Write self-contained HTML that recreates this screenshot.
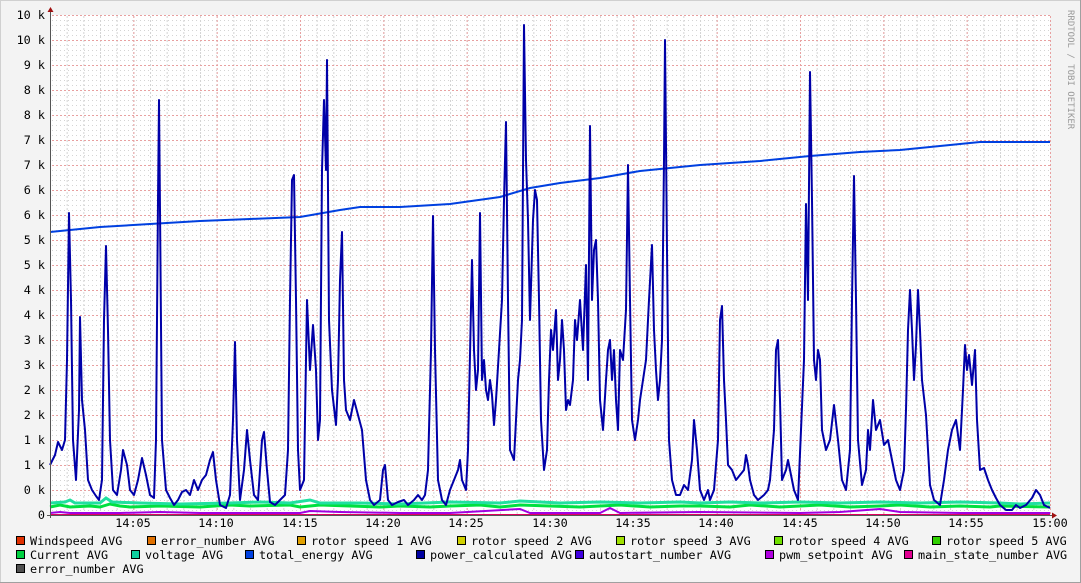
<!DOCTYPE html>
<html><head><meta charset="utf-8"><style>
html,body{margin:0;padding:0;background:#f3f3f3}
svg{display:block}
text{font-family:"DejaVu Sans Mono","Liberation Mono",monospace;font-size:11.8px;fill:#000}
</style></head><body>
<svg width="1081" height="583" viewBox="0 0 1081 583" xmlns="http://www.w3.org/2000/svg">
<defs>
<pattern id="mh" x="0" y="15" width="4" height="5" patternUnits="userSpaceOnUse"><rect x="0" y="0" width="1" height="1" fill="#d4d4d4"/></pattern>
<pattern id="mv" x="50" y="0" width="16.667" height="4" patternUnits="userSpaceOnUse"><rect x="0" y="0" width="1" height="2" fill="#d4d4d4"/></pattern>
<pattern id="Mh" x="0" y="15" width="4" height="25" patternUnits="userSpaceOnUse"><rect x="0" y="0" width="2" height="1" fill="#e8a0a0"/></pattern>
<pattern id="Mv" x="50" y="0" width="83.333" height="4" patternUnits="userSpaceOnUse"><rect x="0" y="0" width="1" height="2" fill="#e8a0a0"/></pattern>
</defs>
<rect x="0" y="0" width="1081" height="583" fill="#f3f3f3"/>
<rect x="0.5" y="0.5" width="1080" height="582" fill="none" stroke="#d0d0d0"/>
<line x1="1080.5" y1="0" x2="1080.5" y2="583" stroke="#a0a0a0"/>
<line x1="0" y1="582.5" x2="1081" y2="582.5" stroke="#a0a0a0"/>
<rect x="50" y="15" width="1000" height="500" fill="#fff"/>
<rect x="50" y="15" width="1000" height="500" fill="url(#mh)"/>
<rect x="50" y="15" width="1000" height="500" fill="url(#mv)"/>
<rect x="50" y="15" width="1001" height="500" fill="url(#Mh)"/>
<rect x="50" y="15" width="1001" height="500" fill="url(#Mv)"/>
<g text-anchor="end">
<text x="45" y="19">10 k</text><text x="45" y="44">10 k</text><text x="45" y="69">9 k</text><text x="45" y="94">8 k</text><text x="45" y="119">8 k</text><text x="45" y="144">7 k</text><text x="45" y="169">7 k</text><text x="45" y="194">6 k</text><text x="45" y="219">6 k</text><text x="45" y="244">5 k</text><text x="45" y="269">5 k</text><text x="45" y="294">4 k</text><text x="45" y="319">4 k</text><text x="45" y="344">3 k</text><text x="45" y="369">3 k</text><text x="45" y="394">2 k</text><text x="45" y="419">2 k</text><text x="45" y="444">1 k</text><text x="45" y="469">1 k</text><text x="45" y="494">0 k</text><text x="45" y="519">0</text>
</g>
<g text-anchor="middle">
<text x="133" y="527">14:05</text><text x="216" y="527">14:10</text><text x="300" y="527">14:15</text><text x="383" y="527">14:20</text><text x="466" y="527">14:25</text><text x="550" y="527">14:30</text><text x="633" y="527">14:35</text><text x="716" y="527">14:40</text><text x="800" y="527">14:45</text><text x="883" y="527">14:50</text><text x="966" y="527">14:55</text><text x="1050" y="527">15:00</text>
</g>
<text transform="translate(1068,10) rotate(90)" style="font-size:9px;fill:#999">RRDTOOL / TOBI OETIKER</text>
<polyline fill="none" stroke="#00e040" stroke-width="3" points="50,507 60,505 70,507 90,506 100,507 110,504 120,506 130,507 160,506 200,507 230,505 250,506 290,505 300,507 320,505 350,506 380,507 400,506 430,507 450,506 480,505 500,507 520,505 550,506 580,507 600,506 620,505 650,507 680,506 700,506 730,507 750,505 780,507 800,506 820,505 850,507 880,506 900,505 930,507 960,506 990,507 1000,506 1050,507"/>
<polyline fill="none" stroke="#20e0a0" stroke-width="3" points="50,503 65,502 70,500 75,503 100,503 106,498 112,502 140,503 180,504 230,503 260,502 290,503 310,500 320,503 360,503 400,504 450,502 500,503 520,501 560,503 600,502 640,503 680,502 700,503 730,502 760,503 800,502 840,503 880,502 920,503 960,502 1000,503 1020,504 1050,503"/>
<polyline fill="none" stroke="#a000e0" stroke-width="2" points="50,513 60,512 70,513 120,513 160,512 200,513 300,513 310,511 340,512 400,513 450,513 520,509 530,513 600,513 610,508 620,513 700,512 800,513 840,512 880,509 900,512 960,513 1050,513"/>
<line x1="50" y1="514.5" x2="1050" y2="514.5" stroke="#e00060" stroke-width="1"/>
<polyline fill="none" stroke="#0040e0" stroke-width="2" points="50,232 100,227 150,224 200,221 250,219 300,217 340,210 360,207 400,207 450,204 500,197 530,188 560,183 600,178 640,171 700,165 760,161 810,156 860,152 900,150 940,146 980,142 1050,142"/>
<polyline fill="none" stroke="#0000a8" stroke-width="2" stroke-linejoin="round" points="50,465 55,455 58,442 62,450 65,440 67,360 69,213 71,300 73,440 76,480 79,410 80,317 82,400 85,430 88,480 92,490 96,496 99,500 102,480 104,320 106,246 108,330 110,440 113,490 117,495 121,470 123,450 127,465 130,490 134,495 138,480 142,458 146,475 150,495 154,498 156,440 158,200 159,100 160,210 162,440 166,490 170,498 174,505 178,500 182,492 186,490 190,495 194,480 198,490 202,480 206,475 210,460 213,452 216,480 220,505 226,508 230,495 233,420 235,342 237,440 240,500 244,470 247,430 250,460 254,495 258,500 262,440 264,432 267,470 270,502 275,505 280,500 285,495 288,450 290,300 292,180 294,175 296,300 298,450 300,490 304,480 307,300 310,370 313,325 316,370 318,440 320,420 322,170 324,100 326,170 327,60 329,320 332,390 336,425 338,380 340,280 342,232 344,380 346,410 350,420 354,400 358,415 362,430 366,480 370,500 374,505 380,500 383,470 385,465 388,500 392,505 398,502 404,500 408,505 414,500 418,495 422,500 425,495 428,470 431,350 433,216 435,350 438,480 442,500 446,505 450,490 454,480 458,470 460,460 462,480 466,490 468,450 472,260 474,350 476,390 478,370 480,213 482,380 484,360 486,390 488,400 490,380 492,395 494,425 496,400 499,350 502,300 504,200 506,122 508,300 510,450 514,460 518,380 520,360 522,320 524,25 526,160 528,220 530,320 533,220 535,190 537,200 539,300 541,420 544,470 547,450 549,380 551,330 553,350 556,310 558,380 560,360 562,320 564,350 566,410 568,400 570,405 573,380 575,320 577,340 580,300 583,350 586,265 588,380 590,126 592,300 594,250 596,240 598,300 600,400 603,430 606,380 608,350 610,340 612,380 614,350 616,400 618,430 620,350 623,360 626,310 628,165 630,300 632,420 635,440 638,420 640,400 643,380 646,360 649,300 652,245 654,330 656,370 658,400 660,380 662,340 664,160 665,40 667,250 669,440 672,480 676,495 680,495 684,485 688,490 692,460 694,420 697,450 700,490 704,500 708,490 710,500 714,490 718,440 720,320 722,306 724,380 726,420 728,465 732,470 736,480 740,475 744,470 746,455 748,465 750,480 754,495 758,500 764,495 768,490 770,480 774,430 776,350 778,340 780,400 782,480 786,470 788,460 790,470 794,490 798,500 804,360 806,204 808,300 810,72 812,200 814,360 816,380 818,350 820,360 822,430 826,450 830,440 834,405 838,440 842,480 846,490 850,450 852,300 854,176 856,300 858,440 862,485 866,470 868,430 870,450 873,400 876,430 880,420 884,445 888,440 892,460 896,480 900,490 904,470 906,410 908,330 910,290 912,330 914,380 916,345 918,290 920,330 922,380 926,415 930,485 934,500 940,505 944,480 948,450 952,430 956,420 960,450 963,390 965,345 967,370 969,355 972,385 975,350 977,420 980,470 984,468 988,480 992,490 996,498 1000,505 1006,510 1012,510 1016,505 1020,508 1026,505 1032,498 1036,490 1040,495 1044,505 1050,508"/>
<line x1="50.5" y1="10" x2="50.5" y2="518" stroke="#555"/>
<line x1="47" y1="515.5" x2="1054" y2="515.5" stroke="#555"/>
<polygon points="47.5,12 53.5,12 50.5,7" fill="#a01010"/>
<polygon points="1052,512.5 1052,518.5 1057,515.5" fill="#a01010"/>
<g stroke="#000" stroke-width="1">
<rect x="16.5" y="536.5" width="8" height="8" fill="#e03000"/>
<rect x="147.5" y="536.5" width="8" height="8" fill="#e07000"/>
<rect x="297.5" y="536.5" width="8" height="8" fill="#e0a000"/>
<rect x="457.5" y="536.5" width="8" height="8" fill="#d0d000"/>
<rect x="616.5" y="536.5" width="8" height="8" fill="#a0e000"/>
<rect x="774.5" y="536.5" width="8" height="8" fill="#70e000"/>
<rect x="932.5" y="536.5" width="8" height="8" fill="#30d000"/>
<rect x="16.5" y="550.5" width="8" height="8" fill="#00d040"/>
<rect x="131.5" y="550.5" width="8" height="8" fill="#10d0a0"/>
<rect x="245.5" y="550.5" width="8" height="8" fill="#0040e0"/>
<rect x="416.5" y="550.5" width="8" height="8" fill="#0000a0"/>
<rect x="575.5" y="550.5" width="8" height="8" fill="#4000e0"/>
<rect x="765.5" y="550.5" width="8" height="8" fill="#b000e0"/>
<rect x="904.5" y="550.5" width="8" height="8" fill="#e00090"/>
<rect x="16.5" y="564.5" width="8" height="8" fill="#505050"/>
</g>
<text x="30" y="545">Windspeed AVG</text>
<text x="161" y="545">error_number AVG</text>
<text x="311" y="545">rotor speed 1 AVG</text>
<text x="471" y="545">rotor speed 2 AVG</text>
<text x="630" y="545">rotor speed 3 AVG</text>
<text x="788" y="545">rotor speed 4 AVG</text>
<text x="946" y="545">rotor speed 5 AVG</text>
<text x="30" y="559">Current AVG</text>
<text x="145" y="559">voltage AVG</text>
<text x="259" y="559">total_energy AVG</text>
<text x="430" y="559">power_calculated AVG</text>
<text x="589" y="559">autostart_number AVG</text>
<text x="779" y="559">pwm_setpoint AVG</text>
<text x="918" y="559">main_state_number AVG</text>
<text x="30" y="573">error_number AVG</text>
</svg>
</body></html>
